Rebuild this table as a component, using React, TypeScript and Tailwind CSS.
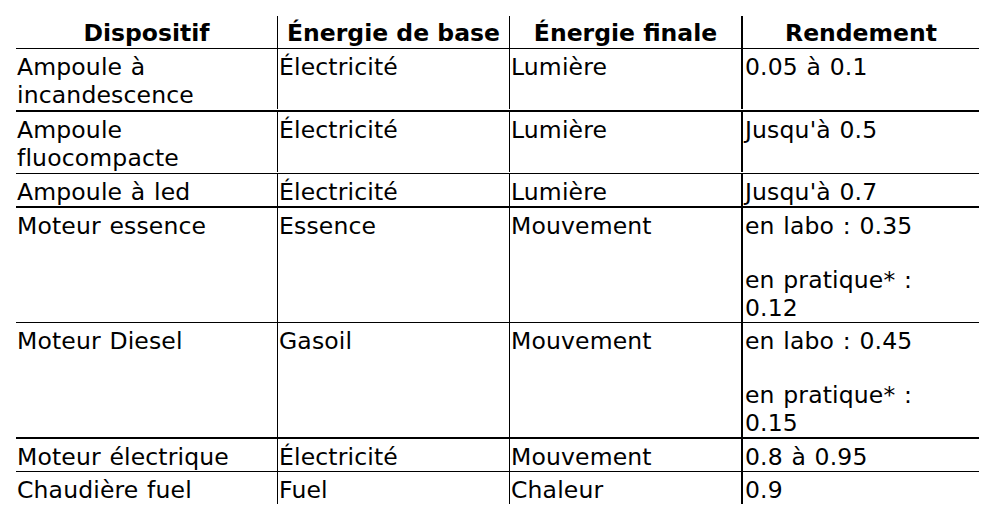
import type { ReactNode } from "react";

// ── Table data ───────────────────────────────────────────────────────────────

type Row = {
  cells: ReactNode[];
  border: string;
};

const COLS = [
  "w-[262px] border-r border-black",
  "w-[232px] border-r border-black",
  "w-[233px] border-r-2 border-black",
  "w-[236px]",
];

const ROWS: Row[] = [
  {
    cells: [
      <>Ampoule à<br />incandescence</>,
      "Électricité",
      "Lumière",
      "0.05 à 0.1",
    ],
    border: "border-b-2 pb-px",
  },
  {
    cells: [
      <>Ampoule<br />fluocompacte</>,
      "Électricité",
      "Lumière",
      "Jusqu'à 0.5",
    ],
    border: "border-b pb-px",
  },
  {
    cells: ["Ampoule à led", "Électricité", "Lumière", "Jusqu'à 0.7"],
    border: "border-b-2",
  },
  {
    cells: [
      "Moteur essence",
      "Essence",
      "Mouvement",
      <>
        <p>en labo : 0.35</p>
        <p className="mt-[26px]">en pratique* :<br />0.12</p>
      </>,
    ],
    border: "border-b",
  },
  {
    cells: [
      "Moteur Diesel",
      "Gasoil",
      "Mouvement",
      <>
        <p>en labo : 0.45</p>
        <p className="mt-[26px]">en pratique* :<br />0.15</p>
      </>,
    ],
    border: "border-b-2",
  },
  {
    cells: ["Moteur électrique", "Électricité", "Mouvement", "0.8 à 0.95"],
    border: "border-b",
  },
  {
    cells: ["Chaudière fuel", "Fuel", "Chaleur", "0.9"],
    border: "pb-[6px]",
  },
];

const HEADERS = ["Dispositif", "Énergie de base", "Énergie finale", "Rendement"];

export default function App() {
  return (
    <div className="min-h-screen bg-white pl-[16px] pt-[16px] font-['DejaVu_Sans',sans-serif] text-[23.5px] leading-[28px] text-black">
      <div className="w-[963px]">
        {/* Header */}
        <div className="flex border-b border-black">
          {HEADERS.map((h, i) => (
            <div key={h} className={`${COLS[i]} pt-[3px] pb-px text-center font-bold`}>
              {h}
            </div>
          ))}
        </div>

        {/* Body */}
        {ROWS.map((row, r) => (
          <div key={r} className={`flex border-black ${row.border}`}>
            {row.cells.map((c, i) => (
              <div
                key={i}
                className={`${COLS[i]} pt-[4px] tracking-[0.15px] [word-spacing:1px] ${i === 3 ? "pl-[2px]" : "pl-px"}`}
              >
                {c}
              </div>
            ))}
          </div>
        ))}
      </div>
    </div>
  );
}
